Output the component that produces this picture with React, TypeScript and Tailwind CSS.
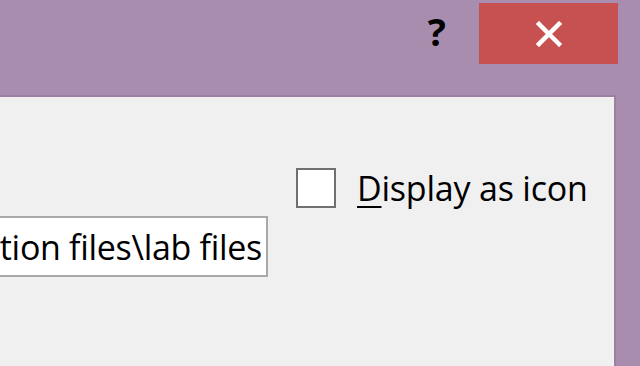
export default function App() {
    return (
        <div
            className="flex flex-col w-[640px] h-[366px] overflow-hidden bg-[#a98daf] text-black"
            style={{ fontFamily: '"Open Sans", "Noto Sans", sans-serif' }}
        >
            {/* title bar */}
            <div className="flex items-start justify-end h-[95px] shrink-0 pr-[22px]">
                <div className="mt-[12px] mr-[33px] text-[38px] font-bold leading-none">?</div>
                <div className="flex items-center justify-center w-[139px] h-[61px] mt-[3px] bg-[#c75050]">
                    <svg width="26" height="26" viewBox="0 0 26 26">
                        <path d="M3 3 L23 23 M23 3 L3 23" stroke="white" strokeWidth="4.5" strokeLinecap="square" />
                    </svg>
                </div>
            </div>

            {/* client area */}
            <div className="flex-1 mr-[24px] bg-[#f0f0f0] border-t-2 border-r-2 border-[#9c80a2]">
                <div className="flex items-center pl-[296px] pt-[71px]">
                    <div className="w-[40px] h-[40px] border-2 border-[#707070] bg-white" />
                    <span className="ml-[21px] text-[34px] font-medium leading-none tracking-[-0.2px]">
                        <span className="underline underline-offset-[5px] decoration-2">D</span>isplay as icon
                    </span>
                </div>
                <div className="flex items-center justify-end w-[268px] h-[61px] mt-[8px] overflow-hidden bg-white border-2 border-[#a9a9a9] border-l-0 pr-[4px]">
                    <span className="whitespace-nowrap text-[34px] font-medium leading-none tracking-[-0.3px]">
                        C:\Users\Documents\presentation files\lab files
                    </span>
                </div>
            </div>
        </div>
    );
}
